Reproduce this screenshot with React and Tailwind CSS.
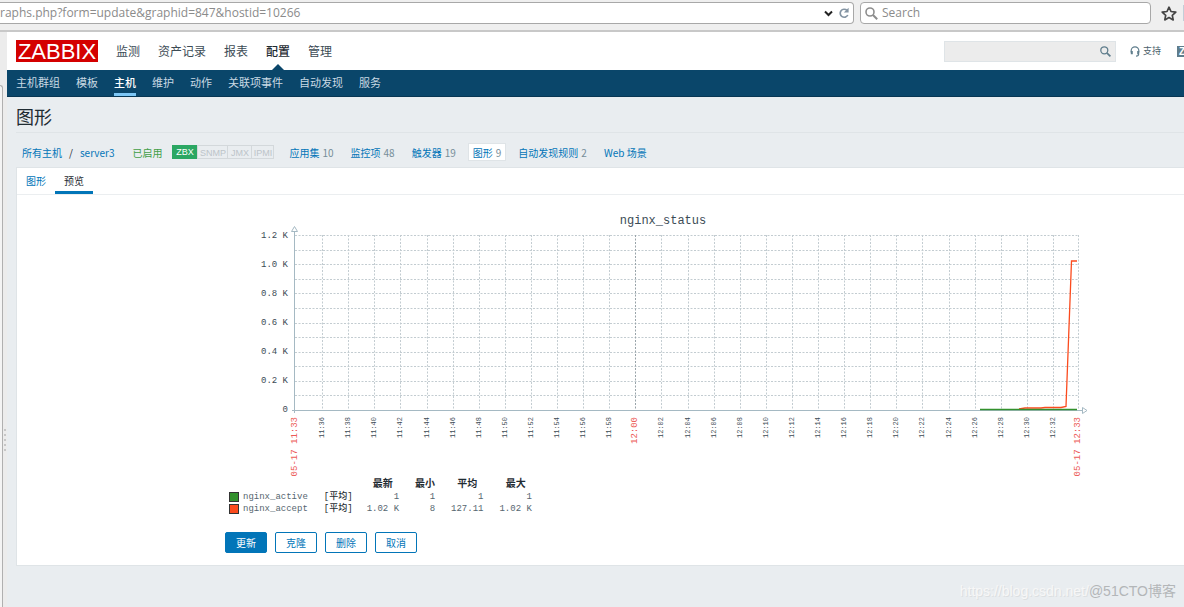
import React, { useState } from 'react';

const mainMenu = ['监测', '资产记录', '报表', '配置', '管理'];
const subMenu = ['主机群组', '模板', '主机', '维护', '动作', '关联项事件', '自动发现', '服务'];

const hostLinks = [
  { label: '应用集', count: 10 },
  { label: '监控项', count: 48 },
  { label: '触发器', count: 19 },
  { label: '图形', count: 9, active: true },
  { label: '自动发现规则', count: 2 },
  { label: 'Web 场景' },
];

const legend = [
  { name: 'nginx_active', swatch: 'bg-[#33912d]', last: '1', min: '1', avg: '1', max: '1' },
  { name: 'nginx_accept', swatch: 'bg-[#fb4b1e]', last: '1.02 K', min: '8', avg: '127.11', max: '1.02 K' },
];

// plot area inside the svg
const LEFT = 70;
const RIGHT = 853;
const TOP = 30;
const BOTTOM = 205;
const MINUTE = (RIGHT - LEFT) / 60;

const yLabels = ['1.2 K', '1.0 K', '0.8 K', '0.6 K', '0.4 K', '0.2 K', '0'];

const pad = n => String(n).padStart(2, '0');

// one tick every two minutes from 11:36 to 12:32
const ticks = Array.from({ length: 29 }, (_, i) => {
  const minutes = 11 * 60 + 36 + i * 2;
  return {
    label: `${pad(Math.floor(minutes / 60))}:${pad(minutes % 60)}`,
    x: Math.round(LEFT + 1 + (i * 2 + 2) * MINUTE),
    hour: minutes % 60 === 0,
  };
});

const BrowserBar = () => (
  <div className="flex h-8 items-start gap-1.5 border-b-2 border-[#c8c8c8] bg-[#efefef] pt-[2px] font-['Open_Sans',sans-serif]">
    <div className="flex h-[22px] flex-1 items-center rounded-r-sm border border-l-0 border-[#a8a8a8] bg-white pr-1">
      <input
        aria-label="Address"
        defaultValue="raphs.php?form=update&graphid=847&hostid=10266"
        className="min-w-0 flex-1 bg-transparent text-[12px] text-[#8b8b8b] outline-none"
      />
      <button aria-label="History" className="mr-1.5">
        <svg width="9" height="7" viewBox="0 0 9 7" fill="none" stroke="#222" strokeWidth="2">
          <path d="M1 1.5 4.5 5 8 1.5" />
        </svg>
      </button>
      <button aria-label="Reload">
        <svg width="10" height="12" viewBox="0 0 10 12" fill="none" stroke="#8494a3" strokeWidth="1.7">
          <path d="M8 3.4A4 4 0 1 0 8.8 8" />
          <path d="M9.6.8v4.8H4.8z" fill="#8494a3" stroke="none" />
        </svg>
      </button>
    </div>
    <div className="flex h-[22px] w-[291px] items-center rounded-sm border border-[#a8a8a8] bg-white px-1">
      <svg width="13" height="13" viewBox="0 0 13 13" fill="none" stroke="#8d8d8d" strokeWidth="1.6">
        <circle cx="5" cy="5" r="4" />
        <path d="M8 8 12.2 12.2" strokeWidth="2" />
      </svg>
      <input
        aria-label="Search the web"
        placeholder="Search"
        className="ml-1 min-w-0 flex-1 bg-transparent text-[12px] outline-none placeholder:text-[#8b8b8b]"
      />
    </div>
    <button aria-label="Bookmark" className="mt-1 ml-1">
      <svg width="16" height="15" viewBox="0 0 16 15" fill="none" stroke="#444" strokeWidth="1.7" strokeLinejoin="round">
        <path d="M8 1.2 10 5.5 14.8 6.1 11.3 9.3 12.2 13.9 8 11.6 3.8 13.9 4.7 9.3 1.2 6.1 6 5.5z" />
      </svg>
    </button>
    <div className="mt-[3px] h-4 w-px bg-[#c3ced8]" />
  </div>
);

const Header = () => (
  <header>
    <div className="flex h-[38px] items-center bg-white pl-[9px]">
      <a
        href="#zabbix"
        className="flex h-[22px] w-[82px] items-center justify-center bg-[#d40000] font-['Liberation_Sans',sans-serif] text-[22px] text-white"
      >
        ZABBIX
      </a>
      <nav className="ml-[18px] flex gap-[18px] self-stretch text-[12px] text-[#3c4b55]">
        {mainMenu.map(item => (
          <a
            key={item}
            href="#menu"
            className={`relative flex items-center ${item === '配置' ? 'font-medium text-[#1f2c33]' : ''}`}
          >
            {item}
            {item === '配置' && (
              <svg className="absolute bottom-0 left-1/2 -translate-x-1/2" width="12" height="6" viewBox="0 0 12 6">
                <path d="M0 6 6 0 12 6z" fill="#0a466a" />
              </svg>
            )}
          </a>
        ))}
      </nav>
      <div className="ml-auto flex h-[21px] w-[172px] items-center border border-[#dfe4e7] bg-[#ececec] pr-1">
        <input aria-label="搜索" className="min-w-0 flex-1 bg-transparent px-1 text-[10px] outline-none" />
        <button aria-label="搜索">
          <svg width="11" height="11" viewBox="0 0 11 11" fill="none" stroke="#5f7d8c" strokeWidth="1.3">
            <circle cx="4.3" cy="4.3" r="3.5" />
            <path d="M6.8 6.8 10.4 10.4" strokeWidth="1.7" />
          </svg>
        </button>
      </div>
      <a href="#support" className="ml-3.5 flex items-center gap-[3px] text-[9px] text-[#4b5f6b]">
        <svg width="10" height="11" viewBox="0 0 10 11" fill="none" stroke="#5f7d8c" strokeWidth="1.2">
          <path d="M1.2 6.5V4.6a3.8 3.8 0 0 1 7.6 0v2" />
          <path d="M1.8 5v3.2M8.2 5v3.2" strokeWidth="2" />
          <path d="M8.6 8c0 1.6-1 2.2-2.6 2.2" />
        </svg>
        支持
      </a>
      <a
        href="#share"
        aria-label="Zabbix Share"
        className="ml-4 h-[11px] w-[7px] overflow-hidden bg-[#5f7d8c] pl-[2px] font-['Liberation_Sans',sans-serif] text-[10px] leading-[11px] font-bold text-white"
      >
        Z
      </a>
    </div>
    <nav className="flex h-[27px] gap-4 border-b border-[#073653] bg-[#0a466a] px-[9px] text-[11px] text-[#c9d9e3]">
      {subMenu.map(item => (
        <a
          key={item}
          href="#submenu"
          className={`flex items-center border-b-3 pt-[2px] ${item === '主机' ? 'border-[#7cc6f5] font-medium text-white' : 'border-transparent'}`}
        >
          {item}
        </a>
      ))}
    </nav>
  </header>
);

const HostBar = () => (
  <div className="flex h-[34px] items-center pt-1 pl-1.5 text-[10px] text-[#0275b8]">
    <a href="#hosts">所有主机</a>
    <span className="mx-[7px] text-[#1f2c33]">/</span>
    <a href="#server3">server3</a>
    <span className="ml-[18px] text-[#429e47]">已启用</span>
    <div className="ml-2.5 flex h-3.5 font-['Liberation_Sans',sans-serif] text-[9px] text-[#bcc4c9]">
      <span className="w-[25px] bg-[#2ba763] text-center leading-[15px] text-white">ZBX</span>
      <span className="w-[31px] border border-[#d3d8db] text-center leading-[14px]">SNMP</span>
      <span className="w-6 border border-l-0 border-[#d3d8db] text-center leading-[14px]">JMX</span>
      <span className="w-[22px] border border-l-0 border-[#d3d8db] text-center leading-[14px]">IPMI</span>
    </div>
    <div className="ml-2.5 flex gap-[7px]">
      {hostLinks.map(link => (
        <a
          key={link.label}
          href="#items"
          className={`flex h-[18px] items-center gap-[3px] border px-1 ${link.active ? 'border-[#dfe4e7] bg-white' : 'border-transparent'}`}
        >
          {link.label}
          {link.count && <span className="text-[#768d99]">{link.count}</span>}
        </a>
      ))}
    </div>
  </div>
);

const Graph = () => (
  <svg width="870" height="274" viewBox="0 0 870 274" className="block font-['Liberation_Mono',monospace]" role="img" aria-label="nginx_status">
    <text x="438" y="19" fontSize="12" textAnchor="middle" fill="#3c4b55">nginx_status</text>

    {/* grid */}
    <g stroke="#c3ccd1" strokeDasharray="2 1.5" fill="none">
      {Array.from({ length: 12 }, (_, i) => {
        const y = Math.round(TOP + (i * (BOTTOM - TOP)) / 12) + 0.5;
        return <path key={i} d={`M${LEFT} ${y}H${RIGHT}`} />;
      })}
      {ticks.map(t => (
        <path key={t.label} d={`M${t.x + 0.5} ${TOP}V${BOTTOM}`} stroke={t.hour ? '#98a3a9' : '#c3ccd1'} />
      ))}
      <path d={`M${RIGHT + 0.5} ${TOP}V${BOTTOM}`} />
    </g>

    {/* axes */}
    <g stroke="#a5b9c3" fill="#fff">
      <path d="M69.5 26V208M67 205.5H858" />
      <path d="M66.5 26.5 69.5 21.5 72.5 26.5z" />
      <path d="M857.5 202.5 862 205.5 857.5 208.5z" />
    </g>

    {/* series */}
    <path d="M794 204 800 203 816 203 820 202.5 836 202.5 841 201.5 846.5 56H852" fill="none" stroke="#fb4b1e" strokeWidth="1.3" />
    <path d="M755 204.5H852" stroke="#33912d" strokeWidth="1.4" />

    {yLabels.map((label, i) => (
      <text key={label} x="63" y={33 + i * 29} fontSize="9" textAnchor="end" fill="#3c4b55">{label}</text>
    ))}
    {ticks.map(t => (
      <text
        key={t.label}
        transform={`translate(${t.x + 2} 212) rotate(-90)`}
        fontSize={t.hour ? 9 : 7}
        textAnchor="end"
        fill={t.hour ? '#ec5a58' : '#3c4b55'}
      >
        {t.label}
      </text>
    ))}
    <text transform="translate(72 212) rotate(-90)" fontSize="9" textAnchor="end" fill="#ec5a58">05-17 11:33</text>
    <text transform="translate(855 212) rotate(-90)" fontSize="9" textAnchor="end" fill="#ec5a58">05-17 12:33</text>
  </svg>
);

const Legend = () => (
  <table className="ml-1 font-['Liberation_Mono','Noto_Sans_CJK_SC',monospace] text-[9px] leading-3 text-[#566670]">
    <thead className="text-[10px] text-[#1f2c33]">
      <tr>
        <th aria-label="颜色" />
        <th aria-label="名称" />
        <th aria-label="函数" />
        <th className="pl-3.5">最新</th>
        <th className="pl-4">最小</th>
        <th className="pl-4">平均</th>
        <th className="pl-4">最大</th>
      </tr>
    </thead>
    <tbody>
      {legend.map(row => (
        <tr key={row.name}>
          <td><div className={`size-2.5 border border-[#333] ${row.swatch}`} /></td>
          <td className="pl-1">{row.name}</td>
          <td className="pl-4 font-medium text-[#1f2c33]">[平均]</td>
          <td className="pl-3.5 text-right">{row.last}</td>
          <td className="pl-4 text-right">{row.min}</td>
          <td className="pl-4 text-right">{row.avg}</td>
          <td className="pl-4 text-right">{row.max}</td>
        </tr>
      ))}
    </tbody>
  </table>
);

const App = () => {
  const [tab, setTab] = useState('预览');

  return (
    <div className="relative flex min-h-screen flex-col overflow-hidden bg-[#e9edf0] font-['Noto_Sans_CJK_SC',sans-serif]">
      <BrowserBar />
      <div className="flex flex-1">
        {/* sidebar splitter */}
        <div className="flex w-[7px] shrink-0 flex-col bg-[#ececec] pt-[53px]">
          <div className="flex w-[3px] flex-1 rounded-tr-sm border-t border-r border-[#b0b0b0] bg-[#f4f4f4]" />
          <div className="absolute top-[429px] left-1 flex flex-col gap-[3px]">
            {[0, 1, 2, 3, 4].map(i => <span key={i} className="size-[2px] bg-[#c6c6c6]" />)}
          </div>
        </div>
        <div className="min-w-0 flex-1">
          <Header />
          <main className="pl-[9px]">
            <h1 className="flex h-9 items-center border-b border-[#dfe4e7] pt-1 text-[18px] text-[#1f2c33]">图形</h1>
            <HostBar />
            <section className="border border-r-0 border-[#dfe4e7] bg-white">
              <div className="flex h-[27px] border-b border-[#ebeef0] text-[10px]">
                {['图形', '预览'].map(name => (
                  <button
                    key={name}
                    onClick={() => setTab(name)}
                    className={`border-b-3 px-[9px] pt-[2px] ${tab === name ? 'border-[#0275b8] text-[#1f2c33]' : 'border-transparent text-[#0275b8]'}`}
                  >
                    {name}
                  </button>
                ))}
              </div>
              <div className="pt-2.5 pb-3 pl-52">
                <Graph />
                <Legend />
                <div className="mt-[17px] flex gap-2 text-[10px]">
                  <button className="h-[21px] w-[42px] rounded-xs border border-[#0275b8] bg-[#0275b8] text-white">更新</button>
                  {['克隆', '删除', '取消'].map(name => (
                    <button key={name} className="h-[21px] w-[42px] rounded-xs border border-[#0275b8] bg-white text-[#0275b8]">
                      {name}
                    </button>
                  ))}
                </div>
              </div>
            </section>
          </main>
        </div>
      </div>
      <div className="absolute right-2 bottom-1.5 flex font-['Liberation_Sans','Noto_Sans_CJK_SC',sans-serif] text-[14px] leading-5">
        <span className="text-[#f7f7f7] [text-shadow:1px_1px_0_#dcdfe1]">https://blog.csdn.net/</span>
        <span className="text-[#b3b6b8]">@51CTO博客</span>
      </div>
    </div>
  );
};

export default App;
